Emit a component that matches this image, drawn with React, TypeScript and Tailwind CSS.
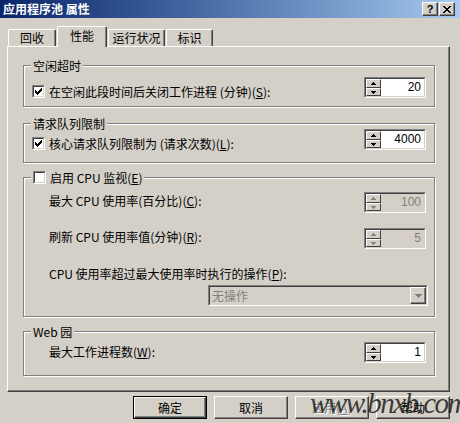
import React from 'react';

const BG = 'bg-[#d4d0c8]';

function Arrow({ dir, color = '#000' }: { dir: 'up' | 'down'; color?: string }) {
  return (
    <svg width="5" height="3" viewBox="0 0 5 3" shapeRendering="crispEdges">
      <path d={dir === 'up' ? 'M2 0h1v1h1v1h1v1H0V2h1V1h1z' : 'M0 0h5v1H4v1H3v1H2V2H1V1H0z'} fill={color} />
    </svg>
  );
}

function Spin({ value, disabled = false }: { value: string; disabled?: boolean }) {
  const arrow = disabled ? '#808080' : '#000';
  return (
    <div className="flex h-[21px] w-[62px] shrink-0 border border-t-[#808080] border-l-[#808080] border-r-white border-b-white">
      <div className="flex flex-1 border border-t-[#404040] border-l-[#404040] border-r-[#d4d0c8] border-b-[#d4d0c8]">
        <div className="flex w-[15px] flex-col">
          <div className={`flex h-[9px] items-center justify-center border border-t-white border-l-white border-r-[#404040] border-b-[#404040] ${BG}`}>
            <Arrow dir="up" color={arrow} />
          </div>
          <div className={`flex h-[8px] items-center justify-center border border-t-white border-l-white border-r-[#404040] border-b-[#404040] ${BG}`}>
            <Arrow dir="down" color={arrow} />
          </div>
        </div>
        <div
          className={`flex-1 pr-[3px] text-right font-['Liberation_Sans',sans-serif] text-[12px] leading-[17px] ${
            disabled ? 'bg-[#d4d0c8] text-[#808080]' : 'bg-white text-black'
          }`}
        >
          {value}
        </div>
      </div>
    </div>
  );
}

function Check({ checked = false }: { checked?: boolean }) {
  return (
    <div className="h-[13px] w-[13px] shrink-0 border border-t-[#808080] border-l-[#808080] border-r-white border-b-white">
      <div className="flex h-full w-full items-center justify-center border border-t-[#404040] border-l-[#404040] border-r-[#d4d0c8] border-b-[#d4d0c8] bg-white">
        {checked && (
          <svg width="7" height="7" viewBox="0 0 7 7" shapeRendering="crispEdges">
            <path d="M0 2V5H1V6H2V7H3V6H4V5H5V4H6V3H7V0H6V1H5V2H4V3H3V4H2V3H1V2Z" fill="#000" />
          </svg>
        )}
      </div>
    </div>
  );
}

function Group({ legend, className, children }: { legend: React.ReactNode; className: string; children?: React.ReactNode }) {
  return (
    <div className={`relative w-[412px] border border-[#808080] shadow-[inset_1px_1px_0_#fff,1px_1px_0_#fff] ${className}`}>
      <div className={`absolute -top-[7px] left-[7px] flex items-center gap-[4px] px-[2px] text-[12px] leading-[13px] ${BG}`}>
        {legend}
      </div>
      {children}
    </div>
  );
}

function Tab({ label, active = false, className = '' }: { label: string; active?: boolean; className?: string }) {
  return (
    <div
      className={`flex items-center justify-center rounded-t-[2px] border-t border-l border-r border-t-white border-l-white border-r-[#404040] shadow-[inset_-1px_0_0_#808080] text-[12px] leading-none ${BG} ${
        active ? 'relative z-10 -mb-[1px] h-[21px] pb-[2px]' : 'h-[17px]'
      } ${className}`}
    >
      {label}
    </div>
  );
}

function Btn({ children, isDefault = false, disabled = false }: { children: React.ReactNode; isDefault?: boolean; disabled?: boolean }) {
  const face = (
    <div
      className={`flex h-full w-full items-center justify-center border border-t-white border-l-white border-r-[#404040] border-b-[#404040] shadow-[inset_-1px_-1px_0_#808080] text-[12px] leading-none ${BG} ${
        disabled ? 'text-[#808080] [text-shadow:1px_1px_0_#fff]' : 'text-black'
      }`}
    >
      {children}
    </div>
  );
  return isDefault ? <div className="h-[23px] w-[74px] border border-black">{face}</div> : <div className="h-[23px] w-[74px]">{face}</div>;
}

export default function App() {
  return (
    <div className={`relative flex h-[423px] w-[460px] flex-col overflow-hidden font-['Noto_Sans_CJK_SC',sans-serif] text-black ${BG}`}>
      {/* title bar */}
      <div className="flex h-[18px] items-center justify-between bg-linear-to-r from-[#0a246a] to-[#a6caf0] pl-[3px] pr-[5px]">
        <span className="text-[12px] font-bold leading-none text-white">应用程序池 属性</span>
        <div className="flex gap-[1px]">
          <div className={`flex h-[14px] w-[16px] items-center justify-center border border-t-white border-l-white border-r-[#404040] border-b-[#404040] shadow-[inset_-1px_-1px_0_#808080] font-['Liberation_Sans',sans-serif] text-[11px] font-bold leading-none ${BG}`}>
            ?
          </div>
          <div className={`flex h-[14px] w-[16px] items-center justify-center border border-t-white border-l-white border-r-[#404040] border-b-[#404040] shadow-[inset_-1px_-1px_0_#808080] ${BG}`}>
            <svg width="8" height="7" viewBox="0 0 8 7" shapeRendering="crispEdges">
              <path d="M0 0h2v1h1v1h2V1h1V0h2v1H7v1H6v1H5v1h1v1h1v1h1v1H6V6H5V5H3v1H2v1H0V6h1V5h1V4h1V3H2V2H1V1H0z" fill="#000" />
            </svg>
          </div>
        </div>
      </div>

      {/* tabs */}
      <div className="mt-[8px] flex h-[20px] items-end pl-[8px]">
        <Tab label="回收" className="w-[48px]" />
        <Tab label="性能" active className="ml-[1px] w-[50px]" />
        <Tab label="运行状况" className="ml-[1px] w-[57px]" />
        <Tab label="标识" className="ml-[1px] w-[47px]" />
      </div>

      {/* panel */}
      <div className="ml-[7px] h-[346px] w-[443px] border border-t-white border-l-white border-r-[#404040] border-b-[#404040]">
        <div className="flex h-full flex-col pl-[15px] shadow-[inset_-1px_-1px_0_#808080]">
          <Group legend={<span>空闲超时</span>} className="mt-[18px] h-[42px]">
            <div className="flex justify-between pl-[8px] pr-[8px]">
              <div className="mt-[19px] flex items-center gap-[4px] text-[12px] leading-[13px]">
                <Check checked />
                <span>
                  在空闲此段时间后关闭工作进程 (分钟)(<u>S</u>):
                </span>
              </div>
              <div className="mt-[11px]">
                <Spin value="20" />
              </div>
            </div>
          </Group>

          <Group legend={<span>请求队列限制</span>} className="mt-[16px] h-[40px]">
            <div className="flex justify-between pl-[8px] pr-[8px]">
              <div className="mt-[13px] flex items-center gap-[4px] text-[12px] leading-[13px]">
                <Check checked />
                <span>
                  核心请求队列限制为 (请求次数)(<u>L</u>):
                </span>
              </div>
              <div className="mt-[5px]">
                <Spin value="4000" />
              </div>
            </div>
          </Group>

          <Group
            legend={
              <>
                <Check />
                <span>
                  启用 CPU 监视(<u>E</u>)
                </span>
              </>
            }
            className="mt-[14px] h-[140px]"
          >
            <div className="flex flex-col pl-[25px] pr-[8px] text-[12px] leading-[13px]">
              <div className="mt-[14px] flex items-center justify-between">
                <span className="mb-[4px]">
                  最大 CPU 使用率(百分比)(<u>C</u>):
                </span>
                <Spin value="100" disabled />
              </div>
              <div className="mt-[15px] flex items-center justify-between">
                <span className="mb-[4px]">
                  刷新 CPU 使用率值(分钟)(<u>R</u>):
                </span>
                <Spin value="5" disabled />
              </div>
              <div className="mt-[18px]">
                CPU 使用率超过最大使用率时执行的操作(<u>P</u>):
              </div>
              <div className="-mr-[2px] mt-[5px] flex justify-end">
                <div className="flex h-[21px] w-[220px] border border-t-[#808080] border-l-[#808080] border-r-white border-b-white">
                  <div className={`flex flex-1 items-center border border-t-[#404040] border-l-[#404040] border-r-[#d4d0c8] border-b-[#d4d0c8] ${BG}`}>
                    <span className="flex-1 pl-[2px] text-[#808080]">无操作</span>
                    <div className={`flex h-full w-[16px] items-center justify-center border border-t-white border-l-white border-r-[#404040] border-b-[#404040] shadow-[inset_-1px_-1px_0_#808080] ${BG}`}>
                      <svg width="7" height="4" viewBox="0 0 7 4" shapeRendering="crispEdges">
                        <path d="M0 0h7v1H6v1H5v1H4v1H3V3H2V2H1V1H0z" fill="#808080" />
                      </svg>
                    </div>
                  </div>
                </div>
              </div>
            </div>
          </Group>

          <Group legend={<span>Web 园</span>} className="mt-[14px] h-[45px]">
            <div className="flex items-center justify-between pl-[25px] pr-[8px] pt-[10px] text-[12px] leading-[13px]">
              <span className="mb-[3px]">
                最大工作进程数(<u>W</u>):
              </span>
              <Spin value="1" />
            </div>
          </Group>
        </div>
      </div>

      {/* buttons */}
      <div className="mt-[4px] flex gap-[7px] pl-[133px]">
        <Btn isDefault>确定</Btn>
        <Btn>取消</Btn>
        <Btn disabled>
          应用(<u>A</u>)
        </Btn>
        <Btn>帮助</Btn>
      </div>

      {/* watermark */}
      <div className="pointer-events-none absolute left-[310px] top-[389px] font-['Liberation_Serif',serif] text-[29px] italic leading-none tracking-[-1.5px] text-[#1c1c1c]/85">
        www.bnxb.com
      </div>
    </div>
  );
}
